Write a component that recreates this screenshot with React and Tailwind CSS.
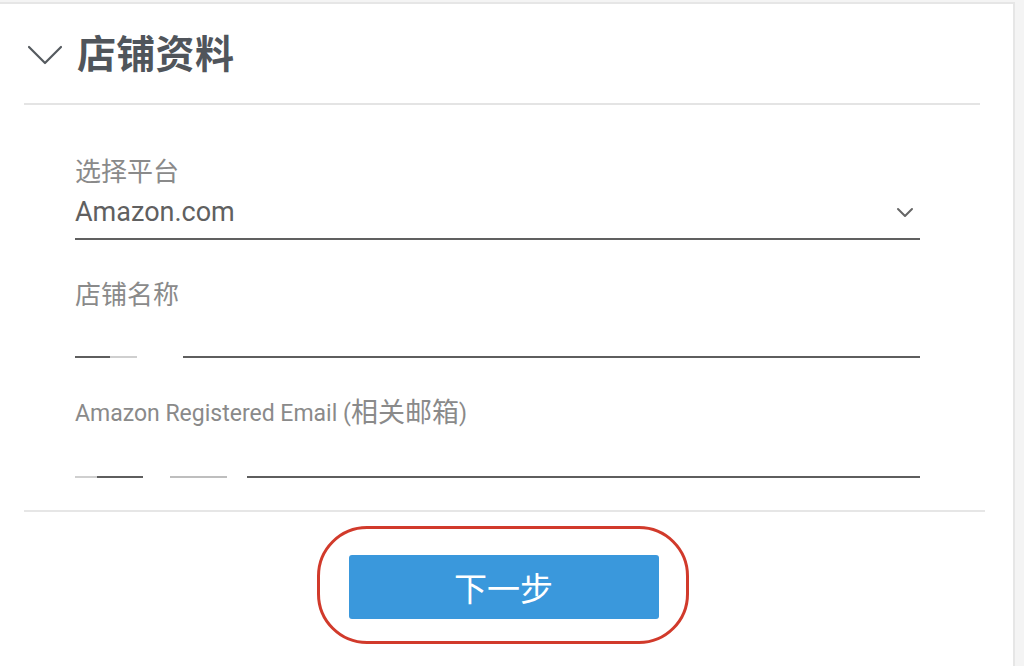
export default function App() {
  return (
    <div className="w-[1024px] h-[666px] overflow-hidden bg-[#f4f4f4] pt-[2px] font-[Roboto,'Noto_Sans_CJK_SC',sans-serif]">
      <div className="w-[1015px] h-[664px] bg-white border-t-2 border-r-2 border-[#e6e6e6] flex flex-col">
        {/* Header */}
        <div className="h-[99px] flex items-center pl-[27px] pt-[3px] gap-[14px]">
          <svg width="36" height="22" viewBox="0 0 36 22" fill="none">
            <path d="M2 3 L18 19 L34 3" stroke="#555a5f" strokeWidth="2.2" strokeLinecap="round" strokeLinejoin="round" />
          </svg>
          <h1 className="text-[39px] font-bold leading-none text-[#50555b] tracking-[0.3px]">店铺资料</h1>
        </div>
        <div className="ml-[24px] w-[956px] h-[2px] bg-[#e4e4e4]" />

        {/* Form */}
        <div className="ml-[75px] w-[845px] pt-[53px] flex flex-col gap-[41px]">
          {/* Field 1 */}
          <div className="flex flex-col gap-[10px]">
            <div className="text-[26px] leading-[28px] text-[#8a8a8a]">选择平台</div>
            <div className="pb-[10px] border-b-2 border-[#606060] flex items-center justify-between">
              <span className="text-[27px] leading-[32px] text-[#606060]">Amazon.com</span>
              <svg width="18" height="12" viewBox="0 0 18 12" fill="none" className="mr-[6px] mt-[2px]">
                <path d="M2 2 L9 9 L16 2" stroke="#666" strokeWidth="2" strokeLinecap="round" strokeLinejoin="round" />
              </svg>
            </div>
          </div>

          {/* Field 2 */}
          <div className="flex flex-col">
            <div className="text-[26px] leading-[28px] text-[#8a8a8a]">店铺名称</div>
            <div className="relative h-[49px] border-b-2 border-[#5e5e5e]">
              <div className="absolute left-[35px] bottom-[-3px] w-[27px] h-[5px] bg-white/70" />
              <div className="absolute left-[62px] bottom-[-3px] w-[46px] h-[5px] bg-white" />
            </div>
          </div>

          {/* Field 3 */}
          <div className="flex flex-col">
            <div className="h-[28px] flex items-center text-[23px] leading-none text-[#8a8a8a] whitespace-pre">
              <span>Amazon Registered Email (</span>
              <span className="text-[27px]">相关邮箱</span>
              <span>)</span>
            </div>
            <div className="relative h-[51px] border-b-2 border-[#5e5e5e]">
              <div className="absolute left-0 bottom-[-3px] w-[22px] h-[5px] bg-white/70" />
              <div className="absolute left-[68px] bottom-[-3px] w-[27px] h-[5px] bg-white" />
              <div className="absolute left-[95px] bottom-[-3px] w-[57px] h-[5px] bg-white/60" />
              <div className="absolute left-[152px] bottom-[-3px] w-[20px] h-[5px] bg-white" />
            </div>
          </div>
        </div>

        <div className="mt-[32px] ml-[24px] w-[961px] h-[2px] bg-[#e6e6e6]" />

        {/* Button */}
        <div className="mt-[43px] flex justify-center pr-[6px]">
          <div className="relative">
            <button className="w-[310px] h-[64px] rounded-[3px] bg-[#3a98dc] text-white text-[33px] leading-none font-['Noto_Sans_CJK_SC',sans-serif]">
              下一步
            </button>
            <div className="absolute left-[-32px] top-[-29px] w-[372px] h-[118px] rounded-[50px] border-[3px] border-[#d13a2b] pointer-events-none" />
          </div>
        </div>
      </div>
    </div>
  );
}
